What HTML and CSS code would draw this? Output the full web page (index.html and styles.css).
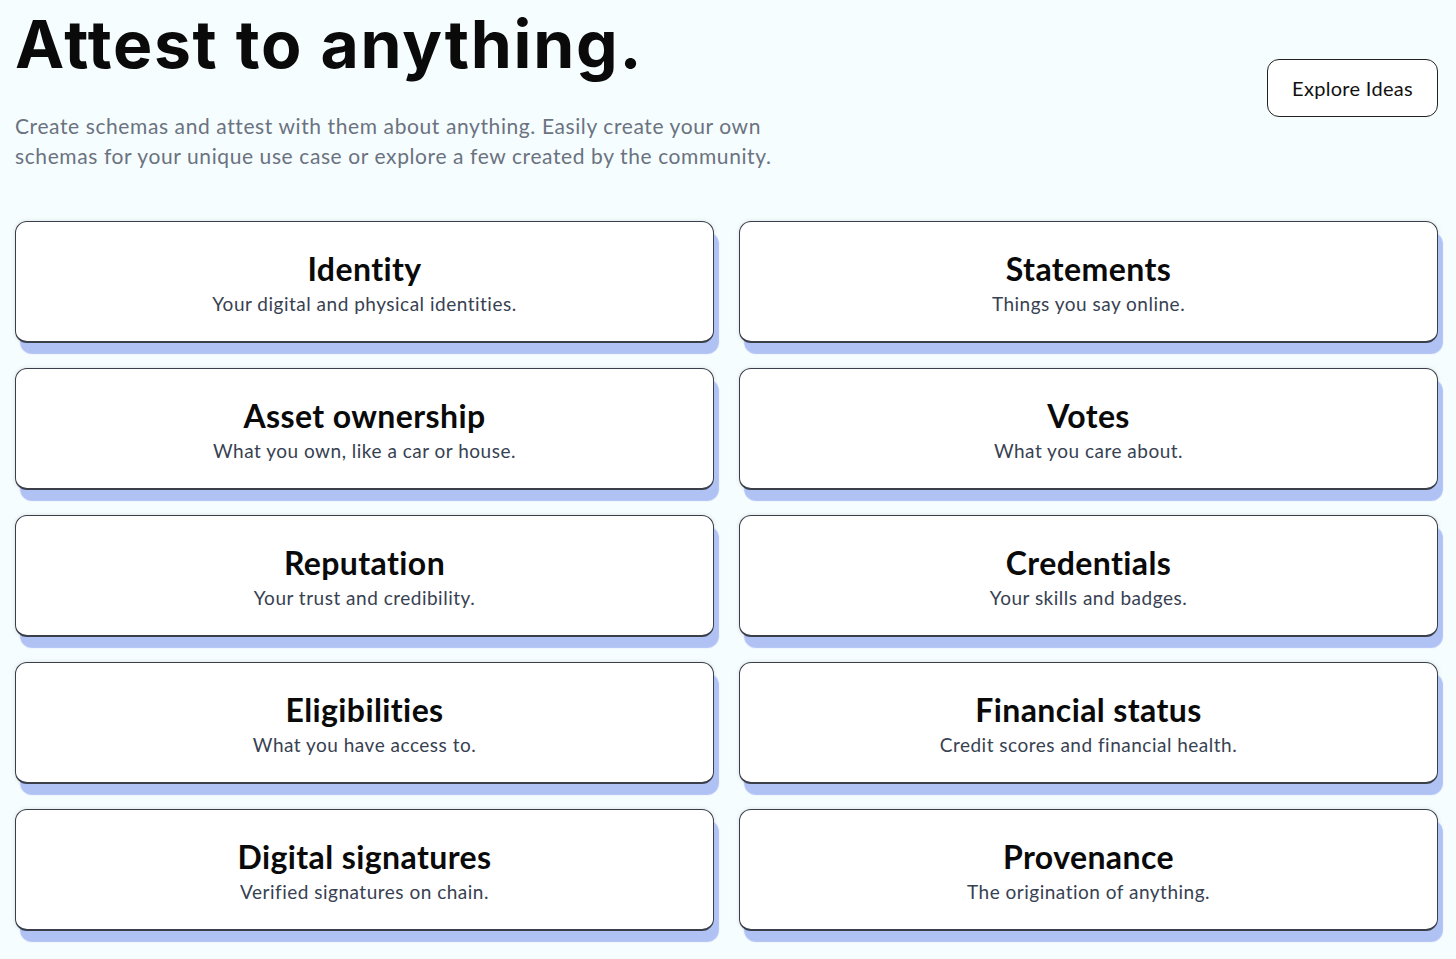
FILE: index.html
```html
<!DOCTYPE html>
<html lang="en">
<head>
<meta charset="utf-8">
<title>Attest to anything.</title>
<link rel="stylesheet" href="styles.css">
</head>
<body>
<div class="page">
  <header class="hero">
    <div class="hero-text">
      <h1 class="title">Attest to anything.</h1>
      <p class="lead">Create schemas and attest with them about anything. Easily create your own schemas for your unique use case or explore a few created by the community.</p>
    </div>
    <button class="explore">Explore Ideas</button>
  </header>
  <main class="grid">
    <div class="card"><h2>Identity</h2><p>Your digital and physical identities.</p></div>
    <div class="card"><h2>Statements</h2><p>Things you say online.</p></div>
    <div class="card"><h2>Asset ownership</h2><p>What you own, like a car or house.</p></div>
    <div class="card"><h2>Votes</h2><p>What you care about.</p></div>
    <div class="card"><h2>Reputation</h2><p>Your trust and credibility.</p></div>
    <div class="card"><h2>Credentials</h2><p>Your skills and badges.</p></div>
    <div class="card"><h2>Eligibilities</h2><p>What you have access to.</p></div>
    <div class="card"><h2>Financial status</h2><p>Credit scores and financial health.</p></div>
    <div class="card"><h2>Digital signatures</h2><p>Verified signatures on chain.</p></div>
    <div class="card"><h2>Provenance</h2><p>The origination of anything.</p></div>
  </main>
</div>
</body>
</html>
```
FILE: styles.css
```css
html, body {
  margin: 0;
  padding: 0;
  background: #f5fdff;
}
body {
  font-family: "Lato", "Noto Sans", sans-serif;
  color: #111;
}
.page {
  padding: 0 18px 24px 15px;
}
.hero {
  display: flex;
  justify-content: space-between;
  align-items: flex-start;
}
.title {
  font-family: "Inter", sans-serif;
  font-weight: 700;
  font-size: 66px;
  letter-spacing: 1.7px;
  line-height: 1;
  margin: 11px 0 0 0;
  color: #0a0a0a;
}
.lead {
  margin: 34px 0 0 0;
  max-width: 780px;
  font-size: 21px;
  letter-spacing: 0.6px;
  line-height: 30px;
  color: #6b7280;
}
.explore {
  margin-top: 59px;
  width: 171px;
  height: 58px;
  background: #fff;
  border: 1px solid #222;
  border-radius: 12px;
  font-family: "Lato", "Noto Sans", sans-serif;
  font-size: 20px;
  letter-spacing: 0.3px;
  color: #111;
}
.grid {
  margin-top: 50px;
  display: grid;
  grid-template-columns: 1fr 1fr;
  column-gap: 25px;
  row-gap: 25px;
}
.card {
  height: 122px;
  box-sizing: border-box;
  background: #fff;
  border: 1px solid #3a3f4a;
  border-bottom-width: 2px;
  border-radius: 12px;
  box-shadow: 5px 11px 1px #b0c1f4, 0 0 4px rgba(0,0,0,0.12);
  display: flex;
  flex-direction: column;
  align-items: center;
  justify-content: center;
  padding-top: 6px;
}
.card h2 {
  margin: 0;
  font-size: 32px;
  font-weight: 700;
  letter-spacing: 0.4px;
  line-height: 38px;
  color: #0a0a0a;
}
.card p {
  margin: 0;
  font-size: 19px;
  letter-spacing: 0.5px;
  line-height: 32px;
  color: #374151;
}
```
